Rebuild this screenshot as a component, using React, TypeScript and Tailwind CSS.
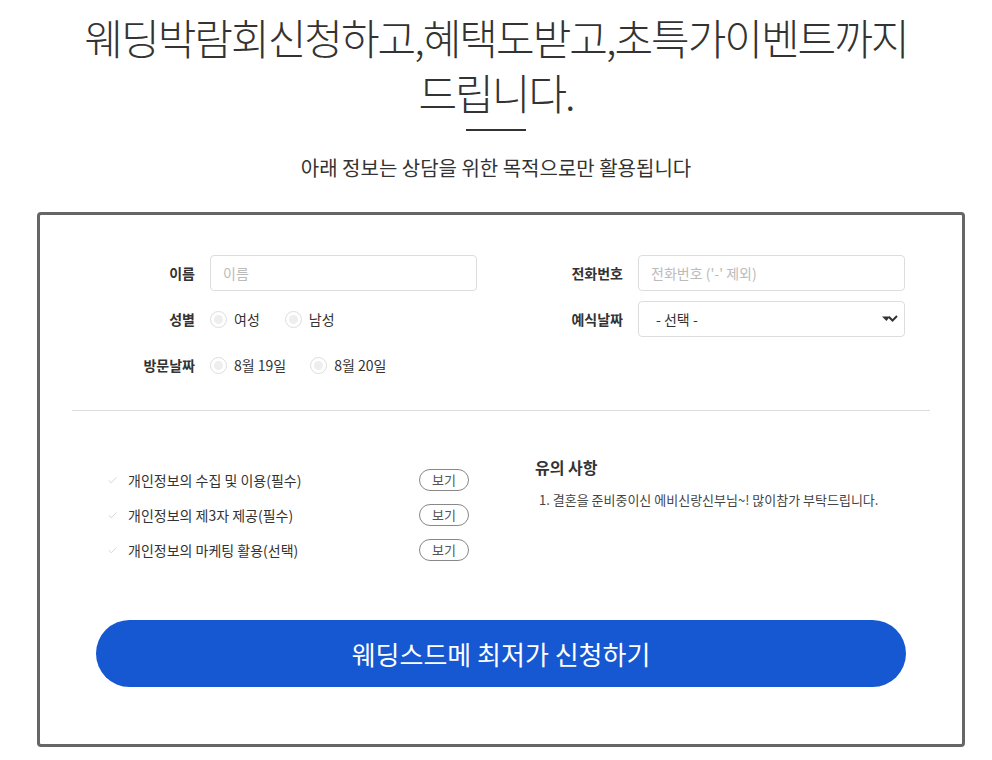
import { Check } from "lucide-react";

const font = { fontFamily: '"Noto Sans CJK KR", "Noto Sans", sans-serif' };

function Radio({ label }: { label: string }) {
  return (
    <label className="flex items-center gap-[7px] text-[14px] text-[#333]">
      <span className="flex h-[17px] w-[17px] items-center justify-center rounded-full border border-[#ddd] bg-white">
        <span className="h-[9px] w-[9px] rounded-full bg-[#eee]" />
      </span>
      {label}
    </label>
  );
}

function Field({ label, children }: { label: string; children: React.ReactNode }) {
  return (
    <div className="flex h-[36px] items-center">
      <div className="w-[95px] shrink-0 text-right text-[14px] font-bold text-[#333]">{label}</div>
      <div className="ml-[15px] flex h-full w-[267px] items-center">{children}</div>
    </div>
  );
}

const agreements = [
  "개인정보의 수집 및 이용(필수)",
  "개인정보의 제3자 제공(필수)",
  "개인정보의 마케팅 활용(선택)",
];

export default function App() {
  return (
    <div className="min-h-[760px] bg-white pb-[15px]" style={font}>
      {/* Heading */}
      <div className="flex flex-col items-center pt-[9px]">
        <h1 className="w-[860px] text-center text-[42px] font-light leading-[55px] tracking-[-2px] text-[#333]">
          웨딩박람회신청하고,혜택도받고,초특가이벤트까지 드립니다.
        </h1>
        <div className="mt-[10px] h-[2px] w-[60px] bg-[#333]" />
        <p className="mt-[22px] text-[20px] tracking-[0px] text-[#333]">
          아래 정보는 상담을 위한 목적으로만 활용됩니다
        </p>
      </div>

      {/* Form box */}
      <div className="ml-[37px] mt-[29px] w-[928px] rounded-[4px] border-[3px] border-[#666] pb-[57px] pt-[40px]">
        <div className="flex pl-[60px]">
          <div className="flex w-[377px] flex-col gap-[10px]">
            <Field label="이름">
              <input
                placeholder="이름"
                className="h-full w-full rounded-[4px] border border-[#ddd] px-[12px] text-[14px] text-[#333] outline-none placeholder:text-[#bbb]"
              />
            </Field>
            <Field label="성별">
              <div className="flex items-center gap-[25px]">
                <Radio label="여성" />
                <Radio label="남성" />
              </div>
            </Field>
            <Field label="방문날짜">
              <div className="flex items-center gap-[24px]">
                <Radio label="8월 19일" />
                <Radio label="8월 20일" />
              </div>
            </Field>
          </div>
          <div className="ml-[51px] flex w-[378px] flex-col gap-[10px]">
            <Field label="전화번호">
              <input
                placeholder="전화번호 ('-' 제외)"
                className="h-full w-full rounded-[4px] border border-[#ddd] px-[12px] text-[14px] text-[#333] outline-none placeholder:text-[#bbb]"
              />
            </Field>
            <Field label="예식날짜">
              <div className="flex h-full w-full items-center justify-between rounded-[4px] border border-[#ddd] pl-[17px] pr-[6px] text-[14px] text-[#333]">
                <span>- 선택 -</span>
                <svg width="16" height="8" viewBox="0 0 16 8">
                  <path d="M0 1.5 L8 1.5 L4.5 6 Z" fill="#333" />
                  <path d="M7 2 L10.5 5.5 L15 1" stroke="#333" strokeWidth="2" fill="none" />
                </svg>
              </div>
            </Field>
          </div>
        </div>

        <div className="mx-[32px] mt-[27px] h-px bg-[#ddd]" />

        <div className="mt-[58px] flex">
          <div className="ml-[67px] flex w-[362px] flex-col gap-[13px]">
            {agreements.map((a) => (
              <div key={a} className="flex h-[22px] items-center">
                <Check size={11} strokeWidth={1.5} className="text-[#c4c4c4]" />
                <span className="ml-[10px] text-[14px] text-[#333]">{a}</span>
                <button className="ml-auto h-[22px] w-[50px] rounded-full border border-[#888] text-[13px] text-[#555]">
                  보기
                </button>
              </div>
            ))}
          </div>
          <div className="ml-[66px] -mt-[14px]">
            <h3 className="text-[16px] font-bold text-[#333]">유의 사항</h3>
            <p className="mt-[11px] pl-[4px] text-[13px] text-[#444]">
              1. 결혼을 준비중이신 에비신랑신부님~! 많이참가 부탁드립니다.
            </p>
          </div>
        </div>

        <button className="mx-[56px] mt-[59px] flex h-[67px] w-[810px] items-center justify-center rounded-full bg-[#1658d2] text-[26px] text-white">
          웨딩스드메 최저가 신청하기
        </button>
      </div>
    </div>
  );
}
